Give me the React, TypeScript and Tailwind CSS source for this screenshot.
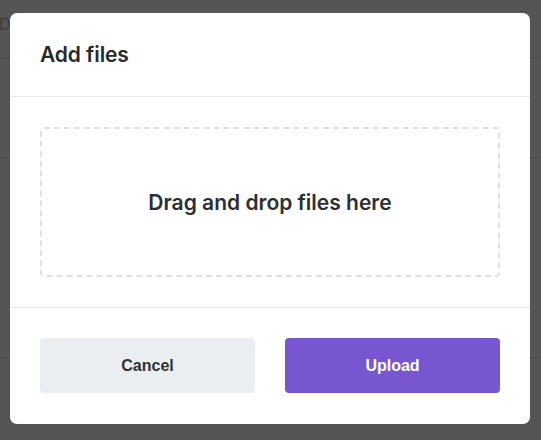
export default function App() {
  return (
    <div className="relative w-[541px] h-[440px] overflow-hidden bg-[#555555] font-['Inter',sans-serif]">
      {/* dimmed page behind the dialog */}
      <div className="flex flex-col">
        <div className="h-[58px] border-b border-[#4a4a4a] px-0 pt-[12px] text-[16px] text-[#3a3a3a]">
          <span className="-ml-[1px]">D</span>
        </div>
        <div className="h-[100px] border-b border-[#4a4a4a]" />
        <div className="h-[200px] border-b border-[#4a4a4a]" />
      </div>

      <div className="absolute left-[10px] top-[13px] w-[520px] h-[411px] flex flex-col rounded-[7px] bg-white">
        <div className="h-[84px] shrink-0 flex items-center px-[30px] border-b border-[#e6e6e6]">
          <h2 className="text-[21px] font-semibold text-[#262a2e] tracking-[-0.1px]">Add files</h2>
        </div>
        <div className="h-[211px] shrink-0 p-[30px] border-b border-[#e6e6e6]">
          <div className="h-full flex items-center justify-center rounded-[4px] border-2 border-dashed border-[#e0e0e0]">
            <span className="text-[21px] font-semibold text-[#2b2f33] mt-[1px]">Drag and drop files here</span>
          </div>
        </div>
        <div className="flex-1 flex gap-[30px] px-[30px] pt-[30px]">
          <button className="w-[215px] h-[55px] pt-[1px] rounded-[4px] bg-[#ebeef1] text-[16px] font-bold text-[#2d3236] font-['Liberation_Sans',Arial,sans-serif]">
            Cancel
          </button>
          <button className="w-[215px] h-[55px] pt-[1px] rounded-[4px] bg-[#7856cf] text-[16px] font-bold text-white font-['Liberation_Sans',Arial,sans-serif]">
            Upload
          </button>
        </div>
      </div>
    </div>
  )
}
